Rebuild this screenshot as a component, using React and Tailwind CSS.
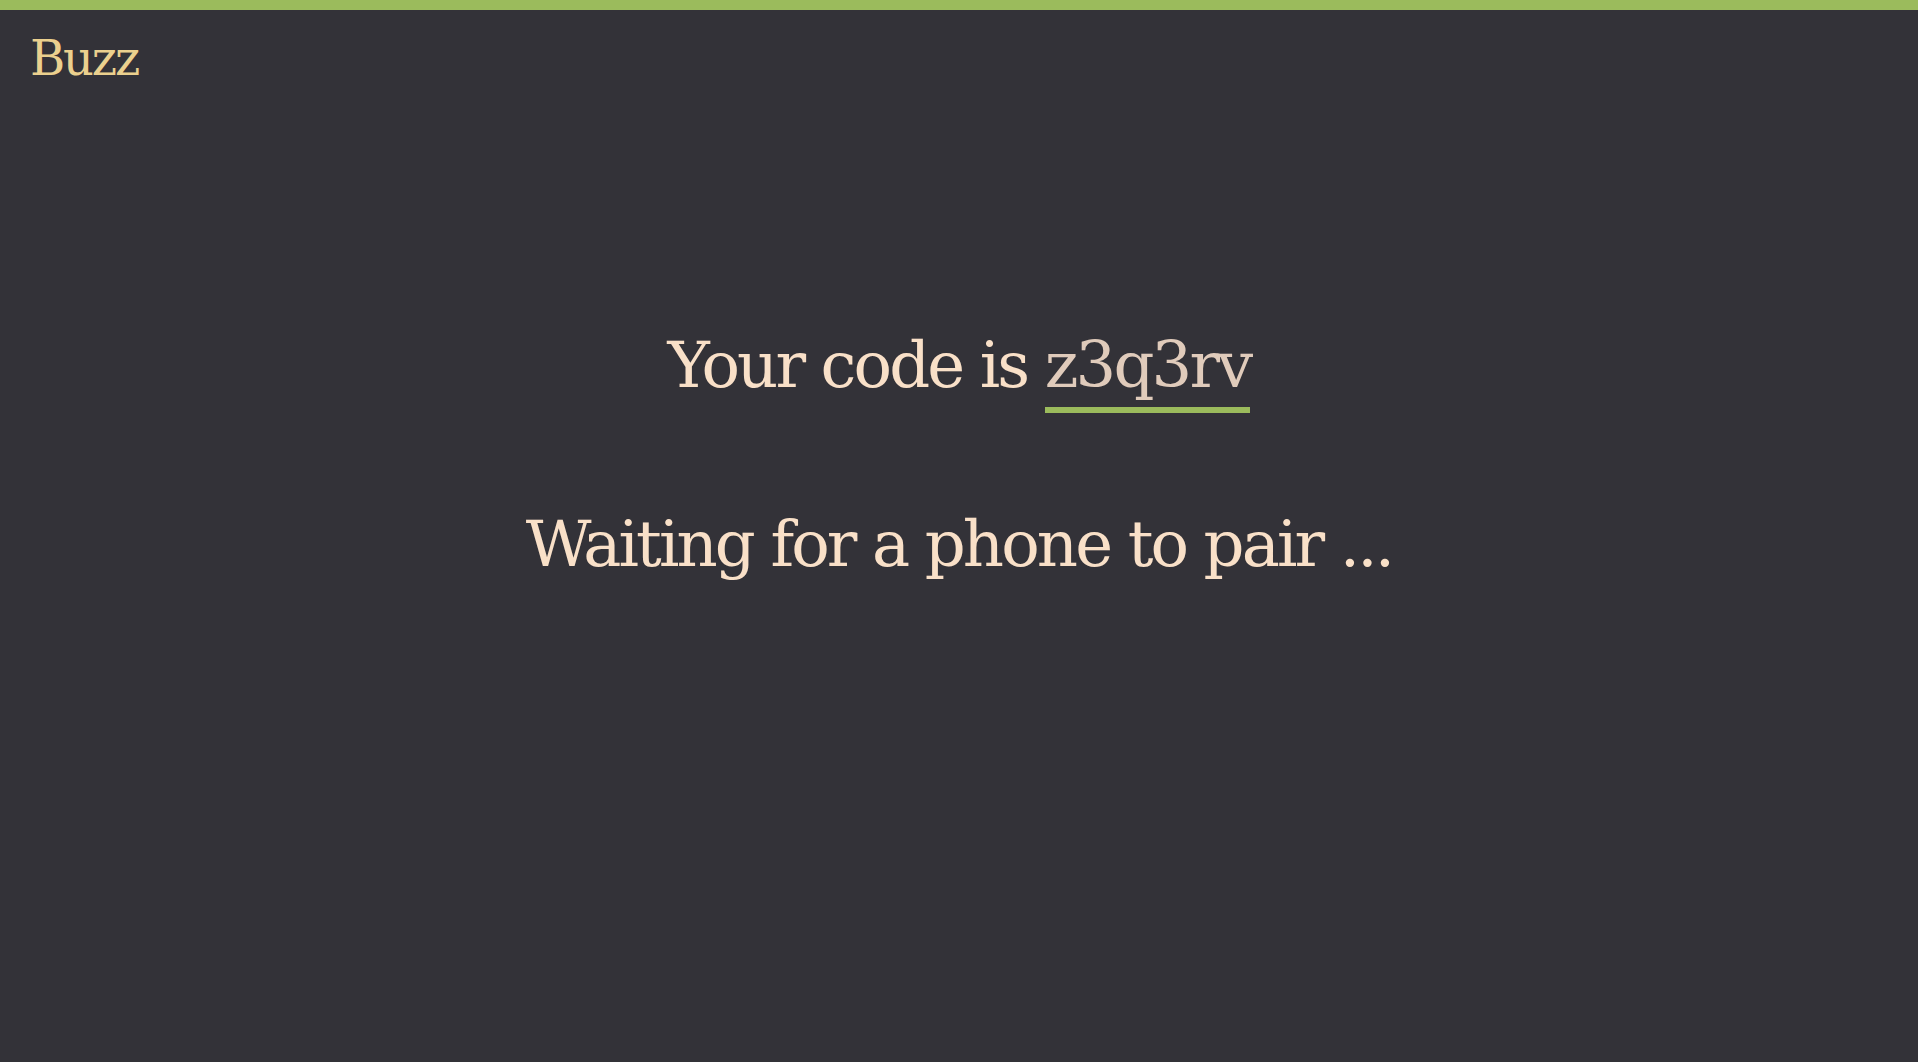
export default function App() {
    const code = 'z3q3rv';

    return (
        <div className="min-h-[1062px] w-full bg-[#333238] font-['DejaVu_Serif',serif]">
            {/* top accent bar */}
            <div className="h-[10px] bg-[#9bbb5c]" />

            <header className="px-[30px] pt-[24px]">
                <h1 className="text-[48px] leading-[48px] tracking-[-0.045em] text-[#ebd08e]">Buzz</h1>
            </header>

            <main className="flex flex-col items-center pt-[251px] text-[64px] tracking-[-0.045em] text-[#f9e0c8]">
                <div className="h-[64px] leading-[64px] whitespace-nowrap">
                    Your code is{' '}
                    <span className="inline-block border-b-[6px] border-[#9bbb5c] pb-[10px] leading-[64px] text-[#e0cbbb]">
                        {code}
                    </span>
                </div>
                <div className="mt-[115px] h-[64px] leading-[64px] whitespace-nowrap">
                    Waiting for a phone to pair ...
                </div>
            </main>
        </div>
    );
}
